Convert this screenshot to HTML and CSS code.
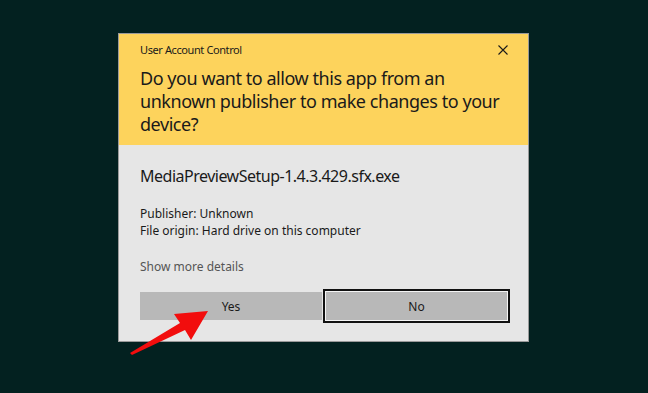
FILE: index.html
```html
<!DOCTYPE html>
<html lang="en">
<head>
    <meta charset="UTF-8">
    <meta name="viewport" content="width=device-width, initial-scale=1.0">
    <title>User Account Control</title>
    <link rel="stylesheet" href="styles.css">
</head>
<body>
    <div class="dialog">
        <!-- Yellow header -->
        <div class="head">
            <div class="title-row">
                <span class="title">User Account Control</span>
                <svg class="close" width="10" height="10" viewBox="0 0 10 10">
                    <path d="M0.5 0.5 L9.5 9.5 M9.5 0.5 L0.5 9.5" stroke="#1a1a1a" stroke-width="1.1" fill="none"/>
                </svg>
            </div>
            <h1>Do you want to allow this app from an unknown publisher to make changes to your device?</h1>
        </div>

        <!-- Details -->
        <div class="body">
            <div class="file">MediaPreviewSetup-1.4.3.429.sfx.exe</div>
            <div class="meta">
                <div>Publisher: Unknown</div>
                <div>File origin: Hard drive on this computer</div>
            </div>
            <div class="more">Show more details</div>
            <div class="buttons">
                <button class="btn">Yes</button>
                <button class="btn focus">No</button>
            </div>
        </div>
    </div>

    <svg class="arrow" width="100" height="60" viewBox="0 0 100 60">
        <path d="M10 53 L60 23 L54 14 L88 11 L71 40 L65 30 L12 55 Z" fill="#f20d0d"/>
    </svg>
</body>
</html>
```

FILE: styles.css
```css
* { margin: 0; padding: 0; box-sizing: border-box; }
body { background: #032120; font-family: "Noto Sans", "Segoe UI", sans-serif; color: #1a1a1a; position: relative; height: 393px; overflow: hidden; }

/* Dialog */
.dialog { width: 411px; margin: 33px 0 0 118px; border: 1px solid #9a9a9a; background: #e6e6e6; }
.head { background: #fdd35c; padding: 8px 20px 9px 21px; }
.title-row { display: flex; align-items: center; justify-content: space-between; height: 15px; }
.title { font-size: 11px; letter-spacing: -0.4px; }
.head h1 { font-weight: normal; font-size: 18px; letter-spacing: -0.45px; line-height: 23px; margin-top: 10px; }

.body { padding: 20px 18px 18px 21px; }
.file { font-size: 16px; letter-spacing: -0.5px; line-height: 22px; }
.meta { font-size: 12px; line-height: 17px; margin-top: 18px; }
.more { font-size: 12px; line-height: 17px; margin-top: 19px; color: #555; }

.buttons { display: flex; align-items: center; margin-top: 14px; height: 34px; }
.btn { font-family: inherit; font-size: 12px; color: #1a1a1a; background: #b8b8b8; border: none; height: 28px; width: 182px; }
.btn.focus { height: 34px; width: 187px; margin-left: 1px; border: 2px solid #111; box-shadow: inset 0 0 0 1px #f4f4f4; }

/* Red pointer arrow */
.arrow { position: absolute; left: 120px; top: 300px; }
```
